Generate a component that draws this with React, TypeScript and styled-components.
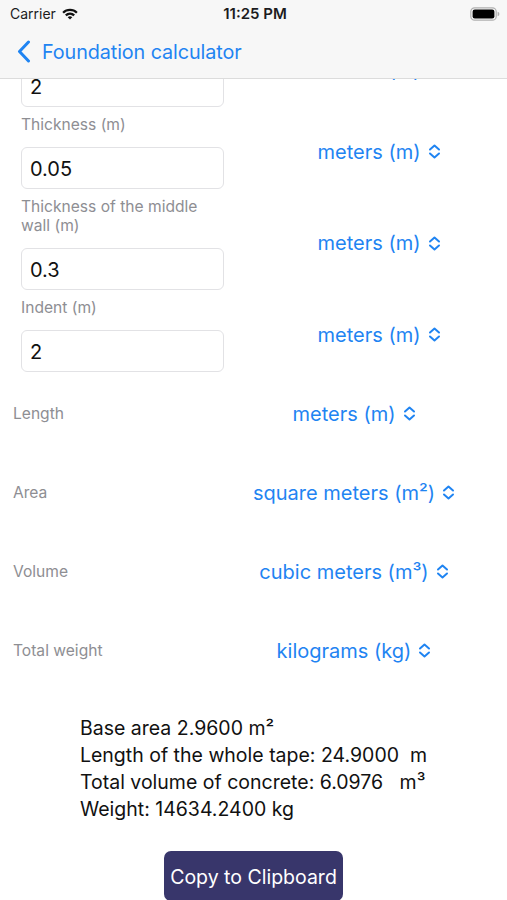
import React from "react";
import styled, { createGlobalStyle } from "styled-components";

const Global = createGlobalStyle`
  html, body { margin: 0; padding: 0; background: #ffffff; }
  body { font-family: Inter, "Noto Sans", "Liberation Sans", sans-serif; -webkit-font-smoothing: antialiased; }
  * { box-sizing: border-box; }
`;

const BLUE = "#1f84f2";
const GRAY = "#8e8e93";

const Screen = styled.div`
  width: 507px;
  height: 900px;
  display: flex;
  flex-direction: column;
  overflow: hidden;
  background: #fff;
`;

const Header = styled.header`
  flex: 0 0 auto;
  height: 79px;
  background: #f7f7f7;
  border-bottom: 1px solid #dcdcdc;
  display: flex;
  flex-direction: column;
`;

const StatusBar = styled.div`
  height: 27px;
  display: grid;
  grid-template-columns: 1fr auto 1fr;
  align-items: center;
  padding: 0 7px 0 10px;
`;

const Carrier = styled.div`
  display: flex;
  align-items: center;
  gap: 6px;
  font-size: 14px;
  color: #1c1c1e;
`;

const Clock = styled.div`
  font-size: 15px;
  font-weight: 600;
  color: #1c1c1e;
`;

const BatteryWrap = styled.div`
  justify-self: end;
  display: flex;
  align-items: center;
`;

const NavBar = styled.div`
  flex: 1;
  display: flex;
  align-items: center;
  gap: 11px;
  padding: 0 0 2px 17px;
`;

const NavTitle = styled.div`
  font-size: 19.8px;
  color: ${BLUE};
  letter-spacing: -0.1px;
`;

const Body = styled.main`
  flex: 1;
  overflow: hidden;
  display: flex;
  flex-direction: column;
`;

const FieldList = styled.div`
  margin-top: -46px;
  display: flex;
  flex-direction: column;
  gap: 8.5px;
`;

const InputRow = styled.div`
  display: grid;
  grid-template-columns: 203px 1fr;
  align-items: center;
  padding: 0 8px 0 21px;
`;

const InputStack = styled.div`
  display: flex;
  flex-direction: column;
  gap: 12.5px;
`;

const FieldLabel = styled.div`
  font-size: 15.6px;
  line-height: 19px;
  color: ${GRAY};
`;

const Field = styled.div`
  height: 42px;
  border: 1px solid #e2e2e5;
  border-radius: 6px;
  display: flex;
  align-items: center;
  padding: 2px 8px 0;
  font-size: 20px;
  color: #111;
`;

const PickerCell = styled.div<{ $shift?: number }>`
  display: flex;
  justify-content: center;
  padding-left: ${(p) => p.$shift ?? 0}px;
`;

const Picker = styled.div`
  display: flex;
  align-items: center;
  gap: 7px;
  font-size: 20px;
  color: ${BLUE};
  white-space: nowrap;
`;

const UnitList = styled.div`
  margin-top: 2.5px;
  display: flex;
  flex-direction: column;
`;

const UnitRow = styled.div`
  height: 79px;
  display: grid;
  grid-template-columns: 200px 1fr;
  align-items: center;
  padding: 0 12px 0 13px;
`;

const UnitLabel = styled.div`
  font-size: 15.6px;
  color: ${GRAY};
`;

const Results = styled.section`
  margin-top: 25px;
  display: flex;
  justify-content: center;
`;

const ResultLines = styled.div`
  display: flex;
  flex-direction: column;
  font-size: 19.5px;
  line-height: 27px;
  color: #111;
  white-space: pre;
`;

const ButtonRow = styled.div`
  margin-top: 28px;
  display: flex;
  justify-content: center;
`;

const CopyButton = styled.button`
  height: 50px;
  padding: 1px 6px 0;
  border: none;
  border-radius: 7px;
  background: #38366b;
  color: #fff;
  font-family: inherit;
  font-size: 19.5px;
`;

const UpDown = () => (
  <svg width="13" height="15" viewBox="0 0 13 15" fill="none" stroke={BLUE} strokeWidth="2" strokeLinecap="round" strokeLinejoin="round">
    <path d="M2 5.5 L6.5 1.6 L11 5.5" />
    <path d="M2 9.5 L6.5 13.4 L11 9.5" />
  </svg>
);

const Wifi = () => (
  <svg width="16" height="12" viewBox="0 0 16 12">
    <path d="M0.3 3.9 A11 11 0 0 1 15.7 3.9 L14.1 5.6 A8.7 8.7 0 0 0 1.9 5.6 Z" fill="#111" />
    <path d="M3 6.6 A7.2 7.2 0 0 1 13 6.6 L11.4 8.3 A5 5 0 0 0 4.6 8.3 Z" fill="#111" />
    <path d="M5.7 9.3 A3.3 3.3 0 0 1 10.3 9.3 L8 11.6 Z" fill="#111" />
  </svg>
);

const Battery = () => (
  <svg width="30" height="14" viewBox="0 0 30 14">
    <rect x="0.8" y="0.8" width="25.4" height="12.4" rx="3.8" fill="none" stroke="#b0b0b0" strokeWidth="1.2" />
    <rect x="2.6" y="2.6" width="21.8" height="8.8" rx="2.2" fill="#000" />
    <path d="M27.6 4.8 Q29.4 5.2 29.4 7 Q29.4 8.8 27.6 9.2 Z" fill="#b0b0b0" />
  </svg>
);

const BackChevron = () => (
  <svg width="14" height="23" viewBox="0 0 14 23" fill="none" stroke={BLUE} strokeWidth="3" strokeLinecap="round" strokeLinejoin="round">
    <path d="M11.5 2 L2.5 11.5 L11.5 21" />
  </svg>
);

const inputs = [
  { label: "Width (m)", value: "2" },
  { label: "Thickness (m)", value: "0.05" },
  { label: "Thickness of the middle wall (m)", value: "0.3" },
  { label: "Indent (m)", value: "2" },
];

const units = [
  { label: "Length", unit: "meters (m)" },
  { label: "Area", unit: "square meters (m²)" },
  { label: "Volume", unit: "cubic meters (m³)" },
  { label: "Total weight", unit: "kilograms (kg)" },
];

export default function App() {
  return (
    <>
      <Global />
      <Screen>
        <Header>
          <StatusBar>
            <Carrier>
              Carrier <Wifi />
            </Carrier>
            <Clock>11:25 PM</Clock>
            <BatteryWrap>
              <Battery />
            </BatteryWrap>
          </StatusBar>
          <NavBar>
            <BackChevron />
            <NavTitle>Foundation calculator</NavTitle>
          </NavBar>
        </Header>
        <Body>
          <FieldList>
            {inputs.map((f) => (
              <InputRow key={f.label}>
                <InputStack>
                  <FieldLabel>{f.label}</FieldLabel>
                  <Field>{f.value}</Field>
                </InputStack>
                <PickerCell $shift={35}>
                  <Picker>
                    meters (m) <UpDown />
                  </Picker>
                </PickerCell>
              </InputRow>
            ))}
          </FieldList>
          <UnitList>
            {units.map((u) => (
              <UnitRow key={u.label}>
                <UnitLabel>{u.label}</UnitLabel>
                <PickerCell>
                  <Picker>
                    {u.unit} <UpDown />
                  </Picker>
                </PickerCell>
              </UnitRow>
            ))}
          </UnitList>
          <Results>
            <ResultLines>
              <span>Base area 2.9600 m²</span>
              <span>Length of the whole tape: 24.9000  m</span>
              <span>Total volume of concrete: 6.0976   m³</span>
              <span>Weight: 14634.2400 kg</span>
            </ResultLines>
          </Results>
          <ButtonRow>
            <CopyButton>Copy to Clipboard</CopyButton>
          </ButtonRow>
        </Body>
      </Screen>
    </>
  );
}
